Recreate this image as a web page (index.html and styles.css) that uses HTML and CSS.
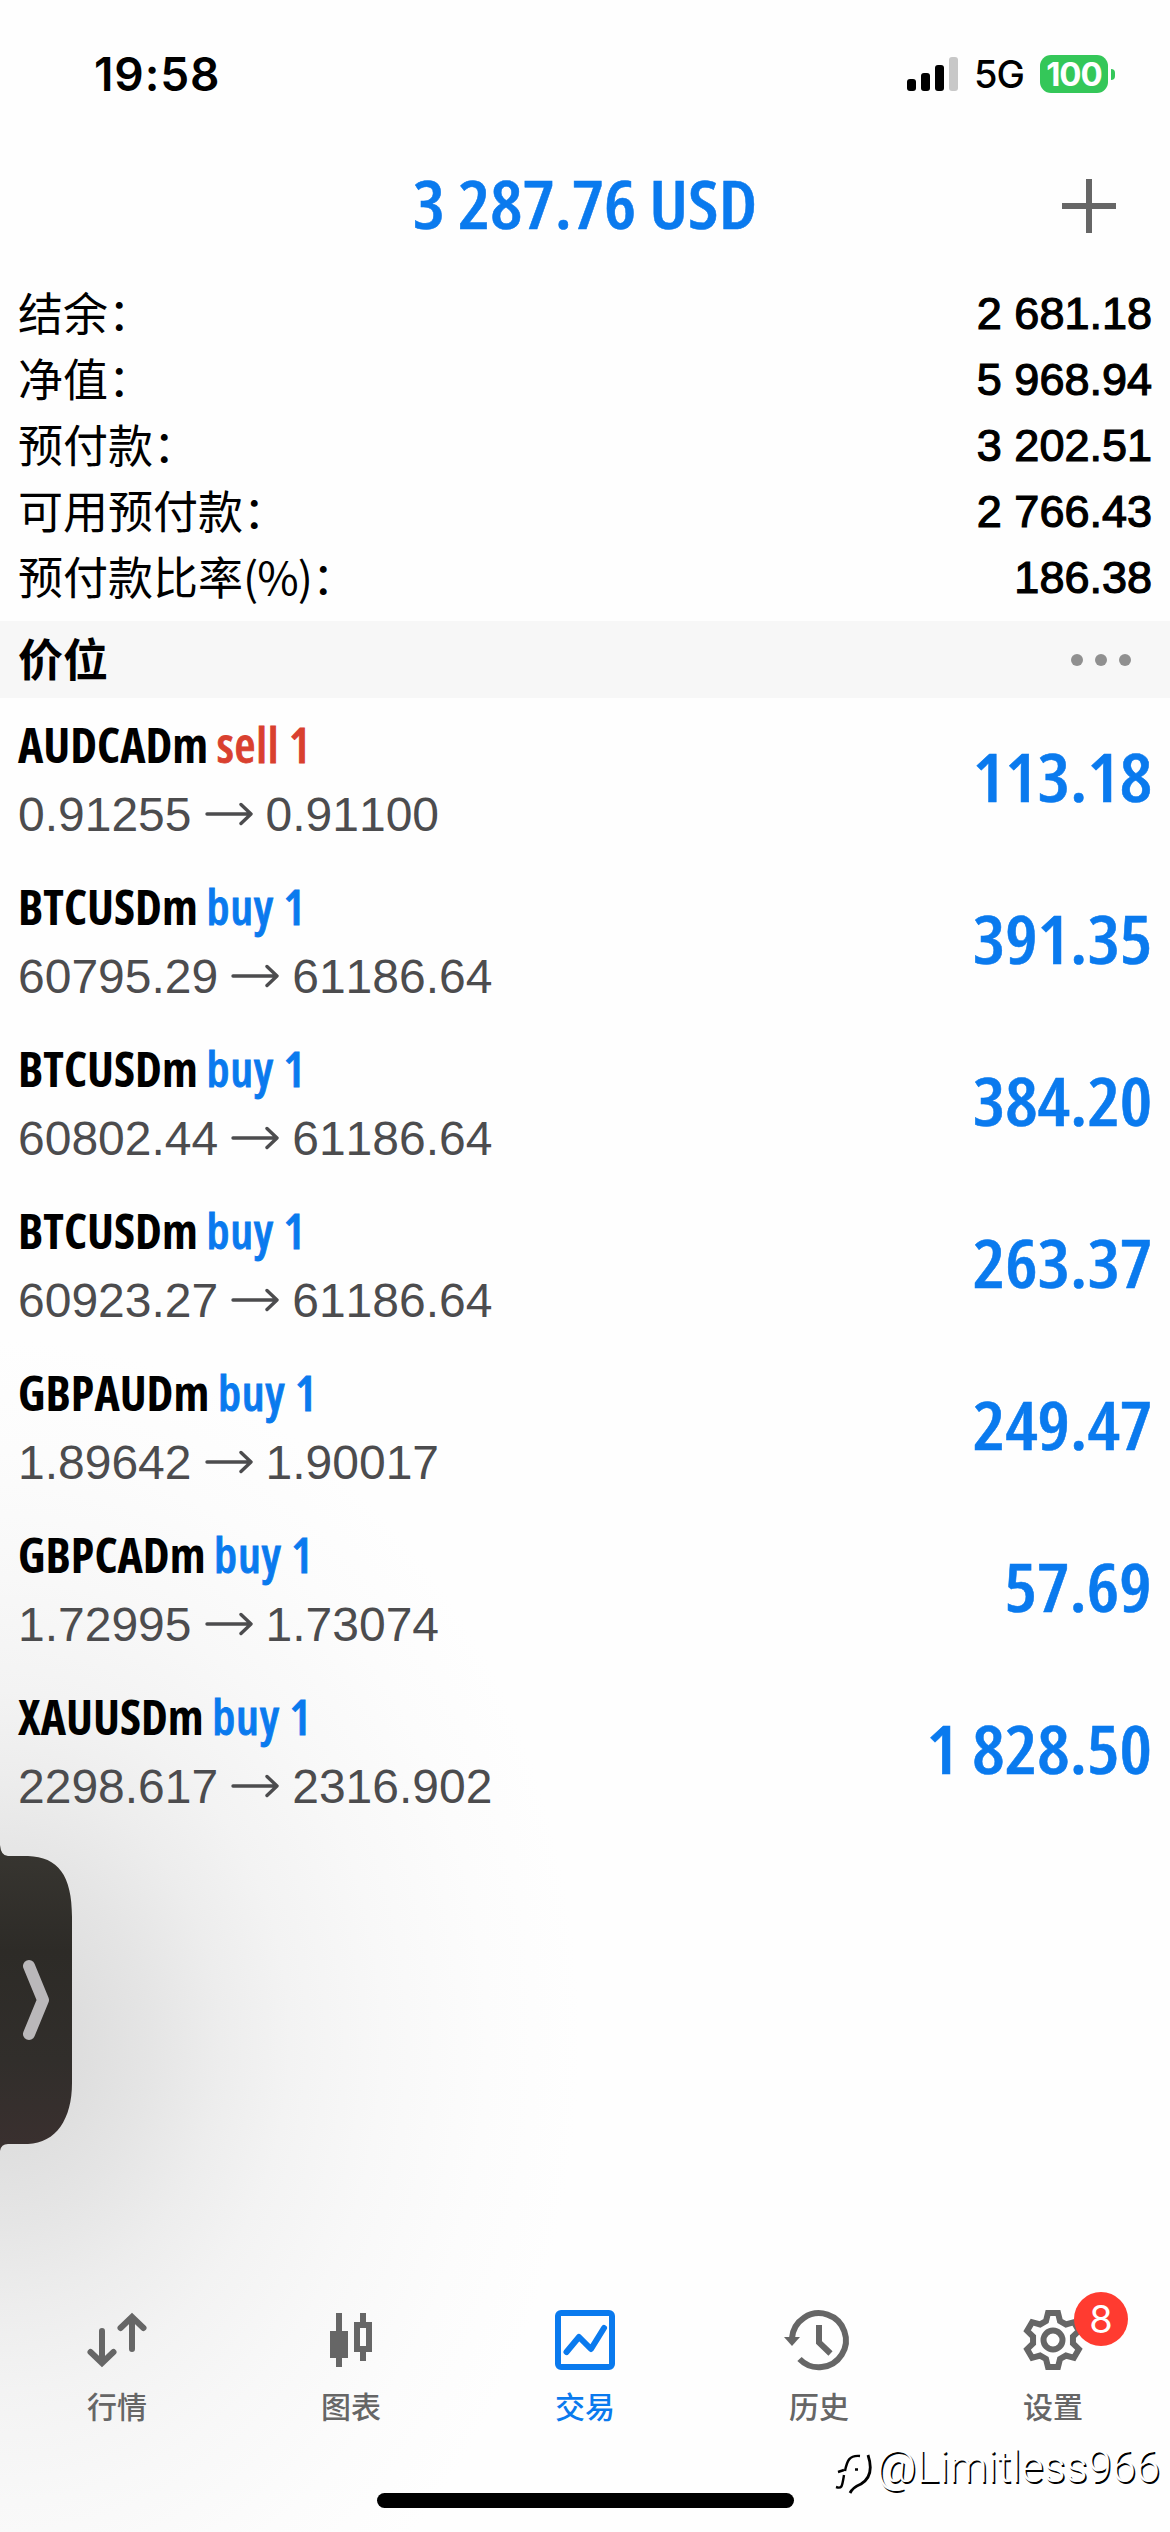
FILE: index.html
```html
<!DOCTYPE html>
<html lang="zh-CN">
<head>
<meta charset="utf-8">
<title>交易</title>
<link rel="stylesheet" href="styles.css">
</head>
<body>
<div class="screen">
  <header class="status">
    <span class="clock">19:58</span>
    <div class="status-right">
      <svg class="signal" width="51" height="34" viewBox="0 0 51 34"><rect x="0" y="22" width="9" height="12" rx="3"/><rect x="14" y="16" width="9" height="18" rx="3"/><rect x="28" y="8" width="9" height="26" rx="3"/><rect class="off" x="42" y="0" width="9" height="34" rx="3"/></svg>
      <span class="network">5G</span>
      <span class="battery">100</span>
      <i class="nub"></i>
    </div>
  </header>
  <div class="title-bar">
    <h1>3 287.76 USD</h1>
    <svg class="plus" width="54" height="54" viewBox="0 0 54 54"><path d="M27 0V54M0 27H54"/></svg>
  </div>
  <dl class="account">
    <div><dt>结余：</dt><dd>2 681.18</dd></div>
    <div><dt>净值：</dt><dd>5 968.94</dd></div>
    <div><dt>预付款：</dt><dd>3 202.51</dd></div>
    <div><dt>可用预付款：</dt><dd>2 766.43</dd></div>
    <div><dt>预付款比率<span class="pct">(%)</span>：</dt><dd>186.38</dd></div>
  </dl>
  <div class="section">
    <h2>价位</h2>
    <svg width="60" height="12" viewBox="0 0 60 12"><circle cx="6" cy="6" r="6"/><circle cx="30" cy="6" r="6"/><circle cx="54" cy="6" r="6"/></svg>
  </div>
  <ul class="positions">
    <li><div><p class="symbol">AUDCADm <b class="sell">sell 1</b></p><p class="prices">0.91255<svg class="arrow" viewBox="0 0 48 24"><path d="M2 12H45M36 2.5L46 12L36 21.5"/></svg>0.91100</p></div><strong>113.18</strong></li>
    <li><div><p class="symbol">BTCUSDm <b class="buy">buy 1</b></p><p class="prices">60795.29<svg class="arrow" viewBox="0 0 48 24"><path d="M2 12H45M36 2.5L46 12L36 21.5"/></svg>61186.64</p></div><strong>391.35</strong></li>
    <li><div><p class="symbol">BTCUSDm <b class="buy">buy 1</b></p><p class="prices">60802.44<svg class="arrow" viewBox="0 0 48 24"><path d="M2 12H45M36 2.5L46 12L36 21.5"/></svg>61186.64</p></div><strong>384.20</strong></li>
    <li><div><p class="symbol">BTCUSDm <b class="buy">buy 1</b></p><p class="prices">60923.27<svg class="arrow" viewBox="0 0 48 24"><path d="M2 12H45M36 2.5L46 12L36 21.5"/></svg>61186.64</p></div><strong>263.37</strong></li>
    <li><div><p class="symbol">GBPAUDm <b class="buy">buy 1</b></p><p class="prices">1.89642<svg class="arrow" viewBox="0 0 48 24"><path d="M2 12H45M36 2.5L46 12L36 21.5"/></svg>1.90017</p></div><strong>249.47</strong></li>
    <li><div><p class="symbol">GBPCADm <b class="buy">buy 1</b></p><p class="prices">1.72995<svg class="arrow" viewBox="0 0 48 24"><path d="M2 12H45M36 2.5L46 12L36 21.5"/></svg>1.73074</p></div><strong>57.69</strong></li>
    <li><div><p class="symbol">XAUUSDm <b class="buy">buy 1</b></p><p class="prices">2298.617<svg class="arrow" viewBox="0 0 48 24"><path d="M2 12H45M36 2.5L46 12L36 21.5"/></svg>2316.902</p></div><strong>1 828.50</strong></li>
  </ul>
  <nav class="tabs">
    <a><svg class="icon" viewBox="-30 -30 60 60"><path d="M-15 -9V23M-26.500 12L-15 23L-3.500 12M15 9V-23M3.500 -12L15 -23L26.500 -12" stroke-linecap="round"/></svg>行情</a>
    <a><svg class="icon" viewBox="-30 -30 60 60"><path class="solid" d="M-15 -27h6v18h6v27h-6v9h-6v-9h-6v-27h6z"/><path class="solid" fill-rule="evenodd" d="M9 -27h6v9h6v30h-6v9h-6v-9h-6v-30h6zM9 -12v18h6v-18z"/></svg>图表</a>
    <a class="active"><svg class="icon" viewBox="-30 -30 60 60"><rect x="-27" y="-27" width="54" height="54" rx="3"/><path d="M-18.500 12L-6 -3L6 9L19 -12" stroke-linecap="round" stroke-linejoin="round"/></svg>交易</a>
    <a><svg class="icon" viewBox="-30 -30 60 60"><path d="M-27 -2A27 27 0 1 1 -19.500 19M0 -15V2.500L11.500 13.500"/><path class="solid" d="M-35 -3H-19L-27 6Z"/></svg>历史</a>
    <a><svg class="icon" viewBox="-30 -30 60 60"><path d="M-7 -19L-5 -27H5L7 -19L12.950 -15.560L20.880 -17.830L25.880 -9.170L19.950 -3.440V3.440L25.880 9.170L20.880 17.830L12.950 15.560L7 19L5 27H-5L-7 19L-12.950 15.560L-20.880 17.830L-25.880 9.170L-19.950 3.440V-3.440L-25.880 -9.170L-20.880 -17.830L-12.950 -15.560Z"/><circle r="9.500"/></svg>设置<span class="badge">8</span></a>
  </nav>
  <div class="home"></div>

  <div class="glow"></div>
  <svg class="handle" width="73" height="308" viewBox="0 0 73 308">
    <defs><linearGradient id="hg" x1="0" y1="0" x2="0" y2="1"><stop offset="0" stop-color="#383631"/><stop offset=".35" stop-color="#2d2b27"/><stop offset=".7" stop-color="#312e2b"/><stop offset="1" stop-color="#3a302f"/></linearGradient></defs>
    <path fill="url(#hg)" d="M0 2Q1 13 8 13H28C58 14 72 32 72 74V240C72 276 56 300 28 301H8Q1 301 0 308Z"/>
    <path d="M29 123L43 157L29 191" fill="none" stroke="#bab8ba" stroke-width="12" stroke-linecap="round" stroke-linejoin="round"/>
  </svg>
  <div class="watermark">
    <svg width="38" height="42" viewBox="0 0 38 42"><path d="M25 3C14 2 12 8 10 18M3 19L9 17M9 22C7 34 7 36 1 34M20 16.500H23" stroke-width="2.400"/><path d="M33 2C37 14 36 25 26 31C19 34 17 36 15 40" stroke-width="2.800"/></svg>
    <span>@Limitless966</span>
  </div>
</div>
</body>
</html>
```
FILE: styles.css
```css
* { box-sizing: border-box; margin: 0; padding: 0; }

body {
  width: 1170px;
  height: 2532px;
  background: #fefefe;
  overflow: hidden;
}

.screen {
  position: relative;
  isolation: isolate;
  display: flex;
  flex-direction: column;
  width: 1170px;
  height: 2532px;
  font-family: "Liberation Sans", "Noto Sans CJK SC", sans-serif;
  color: #000;
}

/* status bar */
.status {
  display: flex;
  justify-content: space-between;
  align-items: center;
  height: 148px;
  padding: 0 55px 0 94px;
  font-family: Inter, sans-serif;
}
.clock { font-size: 46px; font-weight: 600; letter-spacing: 0.9px; }
.status-right { display: flex; align-items: center; }
.signal .off { fill: #c8c8c8; }
.network { width: 66px; margin-left: 16px; font-size: 38px; font-weight: 500; letter-spacing: -1px; }
.battery {
  width: 68px;
  height: 38px;
  border-radius: 11px;
  background: #34c759;
  color: #fff;
  font-size: 33px;
  font-weight: 700;
  line-height: 38px;
  text-align: center;
  letter-spacing: -1px;
}
.nub { width: 4px; height: 11px; margin-left: 3px; border-radius: 0 5px 5px 0; background: #34c759; }

/* title */
.title-bar {
  display: grid;
  grid-template-columns: 1fr auto 1fr;
  align-items: center;
  height: 116px;
  padding: 0 54px;
}
.title-bar h1 { grid-column: 2; padding-bottom: 6px; transform: scaleX(1.09); }
h1, .positions strong {
  font: 600 66px/80px "Open Sans", sans-serif;
  font-stretch: 75%;
  -webkit-text-stroke: 0.5px currentColor;
  color: #0a7aee;
}
.plus { justify-self: end; fill: none; stroke: #666; stroke-width: 6; }

/* account summary */
.account { display: flex; flex-direction: column; padding: 17px 18px 0; height: 357px; }
.account div { display: flex; justify-content: space-between; align-items: center; height: 66px; }
dt { font: 45px/62px "Noto Sans CJK SC", sans-serif; padding-bottom: 4px; }
.pct { letter-spacing: -1px; }
dd { font-size: 45px; line-height: 66px; font-kerning: none; -webkit-text-stroke: 1.2px #000; }

/* section heading */
.section {
  display: flex;
  justify-content: space-between;
  align-items: center;
  height: 77px;
  padding: 0 39px 0 18px;
  background: #f7f7f7;
}
.section h2 { font: 700 45px/73px "Noto Sans CJK SC", sans-serif; padding-bottom: 4px; }
.section svg { fill: #909090; }

/* positions */
.positions { list-style: none; flex: none; }
.positions li { display: flex; justify-content: space-between; align-items: center; height: 162px; padding: 0 18px; }
.positions strong { padding-bottom: 6px; transform: scaleX(1.1); transform-origin: right; }
.symbol { font: 700 48px/68px "Open Sans", sans-serif; font-stretch: 75%; white-space: pre; padding-bottom: 2px; }
.symbol b { font-weight: 600; letter-spacing: 0.8px; -webkit-text-stroke: 0.8px currentColor; }
.sell { color: #d9402f; }
.buy { color: #0a7aee; }
.prices { display: flex; align-items: center; height: 66px; font-size: 48px; font-kerning: none; color: #4c4c4e; }
.arrow { width: 48px; height: 24px; margin: 0 13px; fill: none; stroke: currentColor; stroke-width: 3.4; stroke-linejoin: round; stroke-linecap: round; }

/* tab bar */
.tabs { display: grid; grid-template-columns: repeat(5, 1fr); margin-top: auto; height: 183px; }
.tabs a {
  position: relative;
  display: flex;
  flex-direction: column;
  align-items: center;
  gap: 13px;
  font: 500 30px/44px "Noto Sans CJK SC", sans-serif;
  color: #666;
}
.tabs .active { color: #0a7aee; }
.icon { width: 60px; height: 60px; overflow: visible; fill: none; stroke: currentColor; stroke-width: 6; }
.icon .solid { fill: currentColor; stroke: none; }
.badge {
  position: absolute;
  left: 138px;
  top: -18px;
  width: 54px;
  height: 54px;
  border-radius: 50%;
  background: #ff3b30;
  color: #fff;
  font: 400 38px/54px Inter, sans-serif;
  text-align: center;
}
.home { align-self: center; width: 417px; height: 15px; margin-bottom: 24px; border-radius: 8px; background: #000; }

/* floating handle and its soft shadow */
.glow {
  position: absolute;
  z-index: -1;
  left: 0;
  top: 1280px;
  width: 640px;
  height: 1252px;
  background: radial-gradient(ellipse 580px 700px at 0 760px, #d6d6d6 0, #dedede 14%, #e5e5e5 26%, #ededed 38%, #f3f3f3 50%, #f8f8f8 66%, #fcfcfc 84%, #fefefe 100%);
}
.handle { position: absolute; left: 0; top: 1843px; }

.watermark { position: absolute; right: 10px; top: 2441px; display: flex; align-items: flex-start; gap: 3px; }
.watermark svg { margin-top: 12px; fill: none; stroke: #000; }
.watermark span { font: 300 43.5px/53px Roboto, sans-serif; color: #fff; text-shadow: 1.5px 1.5px 0 #000; }
```
